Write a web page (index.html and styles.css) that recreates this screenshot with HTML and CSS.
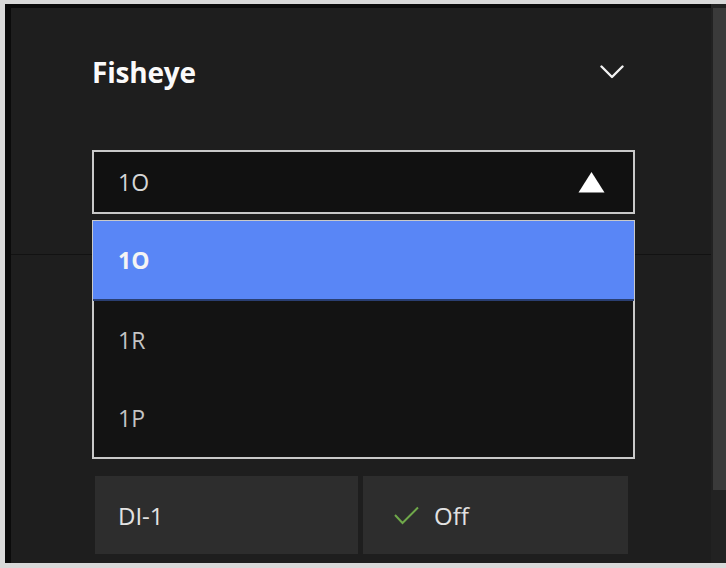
FILE: index.html
```html
<!DOCTYPE html>
<html lang="en">

<head>
    <meta charset="UTF-8">
    <meta name="viewport" content="width=device-width, initial-scale=1.0">
    <title>Fisheye</title>
    <link rel="stylesheet" href="styles.css">
</head>

<body>
    <div class="window">
        <div class="panel">
            <div class="topSection">
                <div class="header">
                    <span class="title">Fisheye</span>
                    <svg class="chevron" width="24" height="14" viewBox="0 0 24 14">
                        <polyline points="1.5,1.5 12,12 22.5,1.5" fill="none" stroke="#f2f2f2" stroke-width="2.4" stroke-linecap="round" stroke-linejoin="round" />
                    </svg>
                </div>
                <div class="selectWrap">
                    <div class="select">
                        <span>1O</span>
                        <svg width="27" height="22" viewBox="0 0 27 22">
                            <polygon points="13.5,1 26.5,21.5 0.5,21.5" fill="#ffffff" />
                        </svg>
                    </div>
                    <ul class="options">
                        <li class="option active">1O</li>
                        <li class="option">1R</li>
                        <li class="option">1P</li>
                    </ul>
                </div>
            </div>
            <div class="bottomSection">
                <div class="cells">
                    <div class="cell">DI-1</div>
                    <div class="cell">
                        <svg class="check" width="27" height="20" viewBox="0 0 27 20">
                            <polyline points="2,10 9.5,18 25,2.5" fill="none" stroke="#6fa84a" stroke-width="2" />
                        </svg>
                        Off
                    </div>
                </div>
            </div>
        </div>
        <div class="rail">
            <div class="thumb"></div>
        </div>
    </div>
</body>

</html>
```

FILE: styles.css
```css
html {
    width: 100%;
    height: 100%;
}

body {
    margin: 0;
    background-color: #d9d9d9;
    font-family: "Open Sans", "Liberation Sans", sans-serif;
    height: 100%;
}

.window {
    display: flex;
    margin: 4px 0 0 5px;
    height: 559px;
    background-color: #0b0b0b;
}

.panel {
    flex: 1;
    margin: 4px 0 0 6px;
    background-color: #1e1e1e;
}

.rail {
    width: 15px;
    background-color: #222;
    padding-left: 2px;
    box-sizing: border-box;
}

.thumb {
    margin-top: 4px;
    height: 482px;
    background-color: #3a3a3a;
}

.topSection {
    height: 246px;
    border-bottom: 1px solid #121212;
}

.header {
    height: 128px;
    display: flex;
    align-items: center;
    justify-content: space-between;
    padding: 0 87px 0 81px;
}

.title {
    color: #fafafa;
    font-size: 28px;
    font-weight: 700;
    letter-spacing: -0.2px;
}

.selectWrap {
    position: relative;
    margin: 14px 0 0 81px;
    width: 543px;
}

.select {
    height: 64px;
    box-sizing: border-box;
    border: 2px solid #c9c9c9;
    background-color: #111;
    display: flex;
    align-items: center;
    justify-content: space-between;
    padding: 0 28px 0 24px;
    color: #d6d6d6;
    font-size: 23px;
}

.options {
    position: absolute;
    top: 70px;
    left: 0;
    width: 100%;
    box-sizing: border-box;
    margin: 0;
    padding: 0;
    list-style: none;
    border: 2px solid #c9c9c9;
    background-color: #131313;
}

.option {
    height: 78px;
    display: flex;
    align-items: center;
    padding-left: 24px;
    color: #c4c4c4;
    font-size: 23px;
}

.option.active {
    margin: -1px -1px 0;
    padding-left: 25px;
    background-color: #5986f6;
    color: #f4f4f4;
    font-weight: 700;
    border-bottom: 2px solid #2a3f73;
}

.bottomSection {
    padding: 221px 0 0 84px;
}

.cells {
    display: flex;
    gap: 5px;
}

.cell {
    width: 263px;
    height: 78px;
    display: flex;
    align-items: center;
    gap: 14px;
    padding-left: 23px;
    box-sizing: border-box;
    background-color: #2d2d2d;
    color: #e2e2e2;
    font-size: 24px;
}

.cell + .cell {
    width: 265px;
    padding-left: 30px;
}
```
